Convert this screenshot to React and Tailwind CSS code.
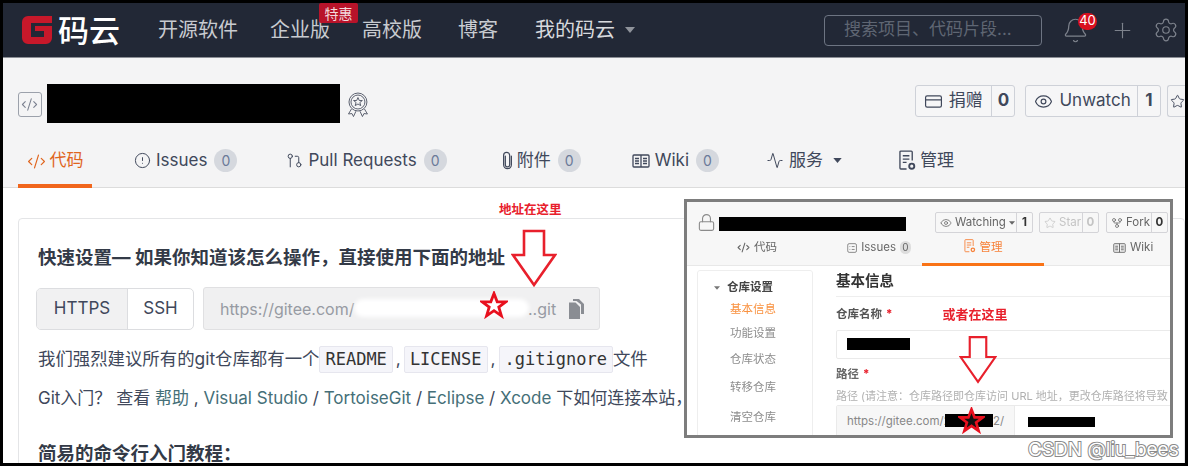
import React from "react";
import { Bell, Plus, Settings, CodeXml, CircleAlert, GitPullRequest, Activity, Eye, Star, Lock, GitFork, CreditCard } from "lucide-react";

const Caret = ({ className }) => (
  <svg viewBox="0 0 10 6" className={className} fill="currentColor">
    <path d="M0 0h10L5 6z" />
  </svg>
);

// red hollow annotation arrow
const DownArrow = ({ className }) => (
  <svg viewBox="0 0 46 58" className={className} fill="none" stroke="#e8202c" strokeWidth="2.6">
    <path d="M13 2h20v24h11L23 56 2 26h11z" />
  </svg>
);

const RedStar = ({ className, fill = "none" }) => (
  <svg viewBox="0 0 28 28" className={className} fill={fill} stroke="#e8101e" strokeWidth="2.8">
    <path d="M14 2.500l3.200 8.300h8.600l-7 5.300 2.600 8.700L14 19.600l-7.400 5.200 2.600-8.700-7-5.300h8.600z" />
  </svg>
);

const Medal = ({ className }) => (
  <svg viewBox="0 0 24 26" className={className} fill="none" stroke="currentColor" strokeWidth="0.9" strokeLinejoin="round">
    <circle cx="12" cy="10" r="9" />
    <circle cx="12" cy="10" r="7" />
    <path d="M12 5.500l1.300 3h3.100l-2.500 2 .9 3.100L12 12l-2.800 1.600.9-3.100-2.500-2h3.100z" />
    <path d="M5.500 17l-3 5 3.500-.4 1.500 3 2.500-5.400M18.500 17l3 5-3.500-.4-1.500 3-2.500-5.400" />
  </svg>
);

const WikiIcon = ({ className }) => (
  <svg viewBox="0 0 18 14" className={className} fill="none" stroke="currentColor" strokeWidth="1.300">
    <rect x="1" y="1" width="16" height="12" rx="1" />
    <path d="M9 1v12M3 4.500h4M3 7h4M3 9.500h4M11 4.500h4M11 7h4M11 9.500h4" />
  </svg>
);

const ClipIcon = ({ className }) => (
  <svg viewBox="0 0 14 22" className={className} fill="none" stroke="currentColor" strokeWidth="1.400" strokeLinecap="round">
    <path d="M4.500 6v10a2.500 2.500 0 0 0 5 0V5a3.500 3.500 0 0 0-7 0v11a4.500 4.500 0 0 0 9 0V6" />
  </svg>
);

const ManageIcon = ({ className }) => (
  <svg viewBox="0 0 18 22" className={className} fill="none" stroke="currentColor" strokeWidth="1.400">
    <path d="M8 20H2a1 1 0 0 1-1-1V2a1 1 0 0 1 1-1h11a1 1 0 0 1 1 1v9" />
    <path d="M4 6h7M4 9.500h7M4 13h4" />
    <circle cx="13.500" cy="17" r="2.700" strokeWidth="2" />
  </svg>
);

const ListBoxIcon = ({ className }) => (
  <svg viewBox="0 0 14 14" className={className} fill="none" stroke="currentColor" strokeWidth="1">
    <rect x="1" y="1" width="12" height="12" rx="2" />
    <path d="M3.500 5h1M6.500 5h4M3.500 9h1M6.500 9h4" />
  </svg>
);

const CopyIcon = ({ className }) => (
  <svg viewBox="0 0 16 20" className={className} fill="currentColor">
    <path d="M5 0h6l5 5v10H13V5.500L8.500 2H5z" />
    <path d="M1 3.500h6.500L12 8v12H1z" />
  </svg>
);

const Badge = ({ children }) => (
  <span className="ml-[7px] flex h-[23px] w-[23px] items-center justify-center rounded-full bg-[#d5d8de] text-[14px] text-[#6b7a99]">{children}</span>
);

const RepoButton = ({ icon: Icon, label, count, className }) => (
  <div className={`flex h-[32px] items-center rounded-[3px] border border-[#ced1d8] bg-[#f6f6f7] text-[17px] text-[#40485b] ${className}`}>
    <div className="flex h-full flex-1 items-center gap-[6px] pl-[8px]">
      <Icon className="h-[19px] w-[19px]" strokeWidth={1.5} />
      <span>{label}</span>
    </div>
    <div className="flex h-full w-[23px] items-center justify-center border-l border-[#ced1d8] font-bold">{count}</div>
  </div>
);

const Chip = ({ children }) => (
  <code className="inline-flex h-[27px] items-center rounded-[2px] border border-[#e6e6ee] bg-[#f5f5fa] px-[5px] text-[17px] text-[#333]" style={{ fontFamily: '"DejaVu Sans Mono", monospace' }}>{children}</code>
);

const MiniButton = ({ icon: Icon, label, count, caret, muted, className }) => (
  <div className={`flex h-[21px] items-center rounded-[2px] border border-[#d4d4d8] text-[11.500px] ${muted ? "text-[#c4c4c4]" : "text-[#666]"} ${className}`}>
    <div className="flex h-full flex-1 items-center gap-[3px] pl-[4px]">
      <Icon className="h-[12px] w-[12px]" strokeWidth={1.5} />
      <span>{label}</span>
      {caret && <Caret className="h-[4px] w-[6px]" />}
    </div>
    <div className={`flex h-full w-[16px] items-center justify-center border-l border-[#d4d4d8] font-bold ${muted ? "" : "text-[#333]"}`}>{count}</div>
  </div>
);

const SideItem = ({ children, className }) => (
  <div className={`pl-[32px] text-[11.500px] text-[#8d8d8d] ${className}`}>{children}</div>
);

function TopBar() {
  return (
    <header className="flex h-[55px] items-center border-b border-[#8b8e95] bg-[#222836] pl-[19px] text-[#c8cbd0]">
      <div className="flex items-center">
        <svg viewBox="0 0 30 30" className="h-[30px] w-[30px]">
          <path d="M6 1h24v7H9v14h13v-6h-9v-5h17v12a6 6 0 0 1-6 6H6a6 6 0 0 1-6-6V7a6 6 0 0 1 6-6z" fill="#c7182a" />
        </svg>
        <span className="ml-[6px] text-[31px] leading-none font-medium text-white">码云</span>
      </div>
      <nav className="ml-[38px] flex items-center gap-[32px] text-[20px]">
        <span>开源软件</span>
        <span className="relative">
          企业版
          <span className="absolute -top-[12px] left-[49px] flex h-[20px] w-[39px] items-center justify-center rounded-[2px] bg-[#b8132a] text-[14px] text-[#f3d9dc]">特惠</span>
        </span>
        <span>高校版</span>
        <span className="ml-[4px]">博客</span>
        <span className="ml-[5px] flex items-center text-[#d8dade]">
          我的码云
          <Caret className="ml-[10px] h-[6px] w-[10px] text-[#8f939b]" />
        </span>
      </nav>
      <div className="ml-[189px] flex h-[31px] w-[218px] items-center rounded-[4px] border border-[#6d7482] pl-[19px] text-[17px] text-[#5f6673]">搜索项目、代码片段...</div>
      <div className="relative ml-[20px]">
        <Bell className="h-[27px] w-[27px] text-[#7d828c]" strokeWidth={1.1} />
        <span className="absolute -top-[4px] left-[16px] flex h-[17px] w-[19px] items-center justify-center rounded-full bg-[#d9101f] text-[13px] text-white">40</span>
      </div>
      <Plus className="ml-[21px] h-[25px] w-[25px] text-[#7d828c]" strokeWidth={1.1} />
      <Settings className="ml-[18px] h-[26px] w-[26px] text-[#7d828c]" strokeWidth={1.1} />
    </header>
  );
}

function RepoHead() {
  return (
    <section className="h-[130px] border-b border-[#dcdcdc] bg-[#f4f4f5]">
      <div className="flex h-[90px] items-start pt-[26px] pl-[15px]">
        <div className="mt-[8px] flex h-[25px] w-[24px] items-center justify-center rounded-[3px] border border-[#9ca1ab] text-[#7b8190]">
          <CodeXml className="h-[17px] w-[17px]" strokeWidth={1.5} />
        </div>
        <div className="ml-[5px] h-[39px] w-[294px] bg-black" />
        <Medal className="mt-[8px] ml-[6px] h-[26px] w-[24px] text-[#4c5261]" />
        <RepoButton icon={CreditCard} label="捐赠" count="0" className="mt-[1px] ml-[545px] w-[101px]" />
        <RepoButton icon={Eye} label="Unwatch" count="1" className="mt-[1px] ml-[10px] w-[136px]" />
        <div className="mt-[1px] ml-[6px] flex h-[32px] w-[18px] items-center rounded-l-[3px] border border-r-0 border-[#ced1d8] pl-[2px] text-[#40485b]">
          <Star className="h-[15px] w-[15px]" strokeWidth={1.5} />
        </div>
      </div>
      <div className="flex h-[40px] items-start pl-[15px] text-[17px] text-[#40485b]">
        <div className="flex h-[40px] w-[74px] items-start justify-center gap-[4px] border-b-[4px] border-[#f1661c] text-[#e0651e]">
          <CodeXml className="mt-[4px] h-[19px] w-[19px]" strokeWidth={1.5} />
          <span>代码</span>
        </div>
        <div className="ml-[42px] flex items-center">
          <CircleAlert className="mr-[5px] h-[17px] w-[17px]" strokeWidth={1.4} />Issues<Badge>0</Badge>
        </div>
        <div className="ml-[49px] flex items-center">
          <GitPullRequest className="mr-[5px] h-[17px] w-[17px]" strokeWidth={1.4} />Pull Requests<Badge>0</Badge>
        </div>
        <div className="ml-[54px] flex items-center">
          <ClipIcon className="mr-[3px] h-[19px] w-[13px]" />附件<Badge>0</Badge>
        </div>
        <div className="ml-[51px] flex items-center">
          <WikiIcon className="mr-[5px] h-[14px] w-[18px]" />Wiki<Badge>0</Badge>
        </div>
        <div className="ml-[47px] flex items-center">
          <Activity className="mr-[5px] h-[17px] w-[18px]" strokeWidth={1.4} />服务
          <Caret className="ml-[10px] h-[5px] w-[9px]" />
        </div>
        <div className="ml-[57px] flex items-center">
          <ManageIcon className="mr-[4px] h-[21px] w-[17px]" />管理
        </div>
      </div>
    </section>
  );
}

function QuickSetup() {
  return (
    <section className="relative mt-[30px] ml-[15px] h-[260px] rounded-t-[4px] border border-[#e4e5e7] bg-white pt-[25px] pl-[19px] text-[17px] text-[#40485b]">
      <h2 className="text-[18.500px] leading-[26px] font-bold whitespace-nowrap text-[#333a47]">快速设置— 如果你知道该怎么操作，直接使用下面的地址</h2>
      <div className="mt-[18px] -ml-[2px] flex items-start">
        <div className="flex h-[42px] w-[158px] overflow-hidden rounded-[5px] border border-[#dcdde0] text-[#40485b]">
          <div className="flex w-[90px] items-center justify-center bg-[#f1f1f2]">HTTPS</div>
          <div className="flex flex-1 items-center justify-center border-l border-[#dcdde0]">SSH</div>
        </div>
        <div className="relative -mt-[1px] ml-[9px] flex h-[43px] w-[397px] items-center rounded-[3px] border border-[#e0e0e2] bg-[#f0f0f1] pl-[16px] text-[16px] text-[#979ba3]">
          <span>https://gitee.com/</span>
          <span className="absolute top-[11px] left-[150px] h-[18px] w-[175px] rounded-full bg-white blur-[2px]" />
          <span className="absolute left-[324px]">..git</span>
          <CopyIcon className="absolute right-[15px] h-[20px] w-[16px] text-[#8a8d93]" />
        </div>
      </div>
      <p className="mt-[16px] flex h-[27px] items-center text-[17.400px]">
        我们强烈建议所有的git仓库都有一个<Chip>README</Chip><span className="mx-[3px]">,</span><Chip>LICENSE</Chip><span className="mx-[3px]">,</span><Chip>.gitignore</Chip>文件
      </p>
      <p className="mt-[12px] leading-[26px] whitespace-nowrap">
        Git入门？ 查看 <span className="text-[#456f78]">帮助</span> , <span className="text-[#456f78]">Visual Studio</span> / <span className="text-[#456f78]">TortoiseGit</span> / <span className="text-[#456f78]">Eclipse</span> / <span className="text-[#456f78]">Xcode</span> 下如何连接本站，
      </p>
      <h2 className="mt-[29px] text-[18.500px] leading-[26px] font-bold text-[#333a47]">简易的命令行入门教程：</h2>
    </section>
  );
}

function PastedPanel() {
  return (
    <aside className="absolute top-[196px] left-[681px] h-[239px] w-[489px] overflow-hidden border-[3px] border-[#7d7d7d] bg-white text-[#666]">
      <div className="h-[64px] border-b border-[#e8e8e8] bg-[#f7f7f7] blur-[0.4px]">
        <div className="flex h-[33px] items-start pt-[10px] pl-[10px]">
          <Lock className="h-[21px] w-[19px] text-[#8b8b8b]" strokeWidth={1.4} />
          <div className="mt-[5px] ml-[3px] h-[14px] w-[187px] bg-black" />
          <MiniButton icon={Eye} label="Watching" count="1" caret className="ml-[29px] w-[98px]" />
          <MiniButton icon={Star} label="Star" count="0" muted className="ml-[6px] w-[60px]" />
          <MiniButton icon={GitFork} label="Fork" count="0" className="ml-[7px] w-[62px]" />
        </div>
        <div className="flex h-[31px] items-start pt-[4px] text-[11.500px]">
          <div className="ml-[50px] flex w-[42px] items-center gap-[4px] whitespace-nowrap"><CodeXml className="h-[13px] w-[13px]" />代码</div>
          <div className="ml-[68px] flex w-[64px] items-center gap-[4px]"><ListBoxIcon className="h-[12px] w-[12px]" />Issues<span className="flex h-[13px] w-[13px] items-center justify-center rounded-full bg-[#ddd] text-[10px]">0</span></div>
          <div className="ml-[11px] flex h-[27px] w-[122px] items-start justify-center gap-[4px] border-b-[3px] border-[#f97316] text-[#f7823a]"><ManageIcon className="h-[14px] w-[12px]" />管理</div>
          <div className="ml-[69px] flex items-center gap-[4px]"><WikiIcon className="h-[10px] w-[13px]" />Wiki</div>
        </div>
      </div>
      <div className="flex blur-[0.4px]">
        <div className="mt-[4px] ml-[10px] h-[180px] w-[116px] shrink-0 rounded-t-[3px] border border-[#eeeeee] pt-[8px]">
          <div className="flex items-center pl-[16px] text-[11.500px] font-bold text-[#444]">
            <Caret className="mr-[7px] h-[4px] w-[6px] text-[#777]" />仓库设置
          </div>
          <SideItem className="mt-[5px] text-[#f9913f]">基本信息</SideItem>
          <SideItem className="mt-[6px]">功能设置</SideItem>
          <SideItem className="mt-[9px]">仓库状态</SideItem>
          <SideItem className="mt-[11px]">转移仓库</SideItem>
          <SideItem className="mt-[13px]">清空仓库</SideItem>
        </div>
        <div className="ml-[23px] min-w-0 flex-1">
          <div className="h-[31px] border-b border-[#eeeeee] pt-[4px] text-[14.500px] font-bold text-[#333]">基本信息</div>
          <div className="mt-[8px] flex items-center text-[11.500px] font-bold text-[#555]">
            仓库名称<span className="ml-[4px] text-[#e8202c]">*</span>
            <span className="ml-[50px] text-[13px] text-[#e8202c]">或者在这里</span>
          </div>
          <div className="mt-[5px] flex h-[29px] w-[360px] items-center rounded-l-[2px] border border-[#eaeaea] pl-[10px]">
            <div className="h-[12px] w-[63px] bg-black" />
          </div>
          <div className="mt-[7px] text-[11.500px] font-bold text-[#666]">路径<span className="ml-[4px] text-[#e8202c]">*</span></div>
          <div className="mt-[5px] text-[11px] whitespace-nowrap text-[#b0b0b0]">路径 (请注意：仓库路径即仓库访问 URL 地址，更改仓库路径将导致</div>
          <div className="mt-[1px] flex h-[33px] w-[360px] items-center rounded-l-[2px] border border-[#eaeaea] text-[11.500px]">
            <div className="relative flex h-full w-[178px] items-center border-r border-[#eaeaea] bg-[#f7f7f7] pl-[10px] text-[#888]">
              https://gitee.com/2
              <span className="absolute top-[8px] left-[108px] h-[13px] w-[48px] bg-black" />
              <span className="absolute left-[156px]">2/</span>
            </div>
            <div className="ml-[13px] h-[10px] w-[67px] bg-black" />
          </div>
        </div>
      </div>
    </aside>
  );
}

export default function App() {
  return (
    <div className="relative h-[466px] w-[1188px] overflow-hidden border-[3px] border-black bg-white" style={{ fontFamily: 'Inter, "Noto Sans CJK SC", sans-serif' }}>
      <TopBar />
      <RepoHead />
      <QuickSetup />
      <PastedPanel />

      {/* red notes drawn over the screenshot */}
      <span className="absolute top-[198px] left-[496px] text-[12.500px] font-bold text-[#e8202c]">地址在这里</span>
      <DownArrow className="absolute top-[226px] left-[508px] h-[58px] w-[46px]" />
      <RedStar className="absolute top-[288px] left-[477px] h-[28px] w-[28px]" />
      <DownArrow className="absolute top-[330px] left-[956px] h-[53px] w-[38px]" />
      <RedStar className="absolute top-[404px] left-[955px] h-[27px] w-[27px]" fill="#111" />

      <span className="absolute top-[433px] left-[1025px] text-[19px] whitespace-nowrap text-white [-webkit-text-stroke:2px_#8a8a8a] [paint-order:stroke_fill]">CSDN @liu_bees</span>
    </div>
  );
}
